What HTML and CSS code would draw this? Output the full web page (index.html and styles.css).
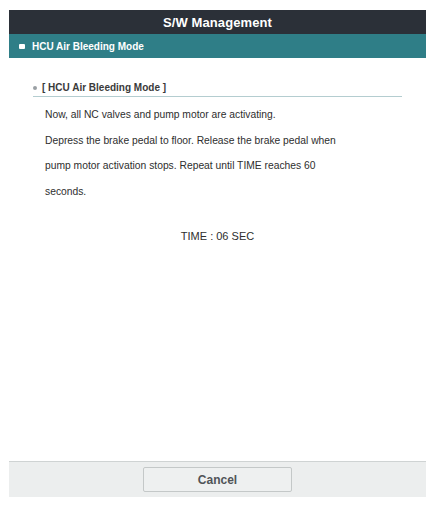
FILE: index.html
```html
<!DOCTYPE html>
<html>
<head>
<meta charset="utf-8">
<link rel="stylesheet" href="styles.css">
</head>
<body>
<div class="frame">
  <div class="titlebar">S/W Management</div>
  <div class="modebar"><span class="modebox"></span>HCU Air Bleeding Mode</div>
  <div class="content">
    <div class="section-head"><span class="dot"></span>[ HCU Air Bleeding Mode ]</div>
    <div class="body-text">
      <p>Now, all NC valves and pump motor are activating.</p>
      <p>Depress the brake pedal to floor. Release the brake pedal when</p>
      <p>pump motor activation stops. Repeat until TIME reaches 60</p>
      <p>seconds.</p>
    </div>
    <div class="time">TIME : 06 SEC</div>
  </div>
  <div class="footer">
    <button class="cancel">Cancel</button>
  </div>
</div>
</body>
</html>
```

FILE: styles.css
```css
html, body {
  margin: 0;
  padding: 0;
  background: #ffffff;
}
body {
  padding: 10px 10px 10px 9px;
  font-family: "Liberation Sans", Arial, sans-serif;
}
.frame {
  height: 487px;
  display: flex;
  flex-direction: column;
}
.titlebar {
  height: 24px;
  background: #2b3038;
  color: #ffffff;
  font-weight: bold;
  font-size: 13px;
  display: flex;
  align-items: center;
  justify-content: center;
  letter-spacing: 0.1px;
}
.modebar {
  height: 24px;
  background: #2f7e87;
  color: #ffffff;
  font-weight: bold;
  font-size: 10px;
  display: flex;
  align-items: center;
  padding-left: 10px;
}
.modebox {
  width: 6px;
  height: 5px;
  background: #ffffff;
  border-radius: 1px;
  margin-right: 7px;
}
.content {
  flex: 1;
  padding: 24px 24px 0 24px;
  color: #333333;
}
.section-head {
  display: flex;
  align-items: center;
  font-size: 10px;
  font-weight: bold;
  color: #3a3a3a;
  width: 369px;
  padding-bottom: 3px;
  border-bottom: 1px solid #b4cdd0;
}
.dot {
  width: 4px;
  height: 4px;
  border-radius: 50%;
  background: #9aa0a4;
  margin: 0 5px 0 0;
}
.body-text {
  padding-left: 12px;
}
.body-text p {
  margin: 0;
  height: 25.7px;
  line-height: 25.7px;
  font-size: 10.3px;
  color: #2e2e2e;
}
.body-text p:first-child {
  margin-top: 5px;
}
.time {
  text-align: center;
  font-size: 11px;
  color: #2e2e2e;
  margin-top: 25px;
  margin-left: -24px;
  margin-right: -24px;
}
.footer {
  height: 36px;
  background: #eceeee;
  border-top: 1px solid #cfd3d3;
  box-sizing: border-box;
  display: flex;
  justify-content: center;
  align-items: center;
}
.cancel {
  width: 149px;
  height: 25px;
  background: #eef0f0;
  border: 1px solid #c4c8c8;
  border-radius: 2px;
  font-family: "Liberation Sans", Arial, sans-serif;
  font-weight: bold;
  font-size: 12px;
  color: #505458;
}
```
